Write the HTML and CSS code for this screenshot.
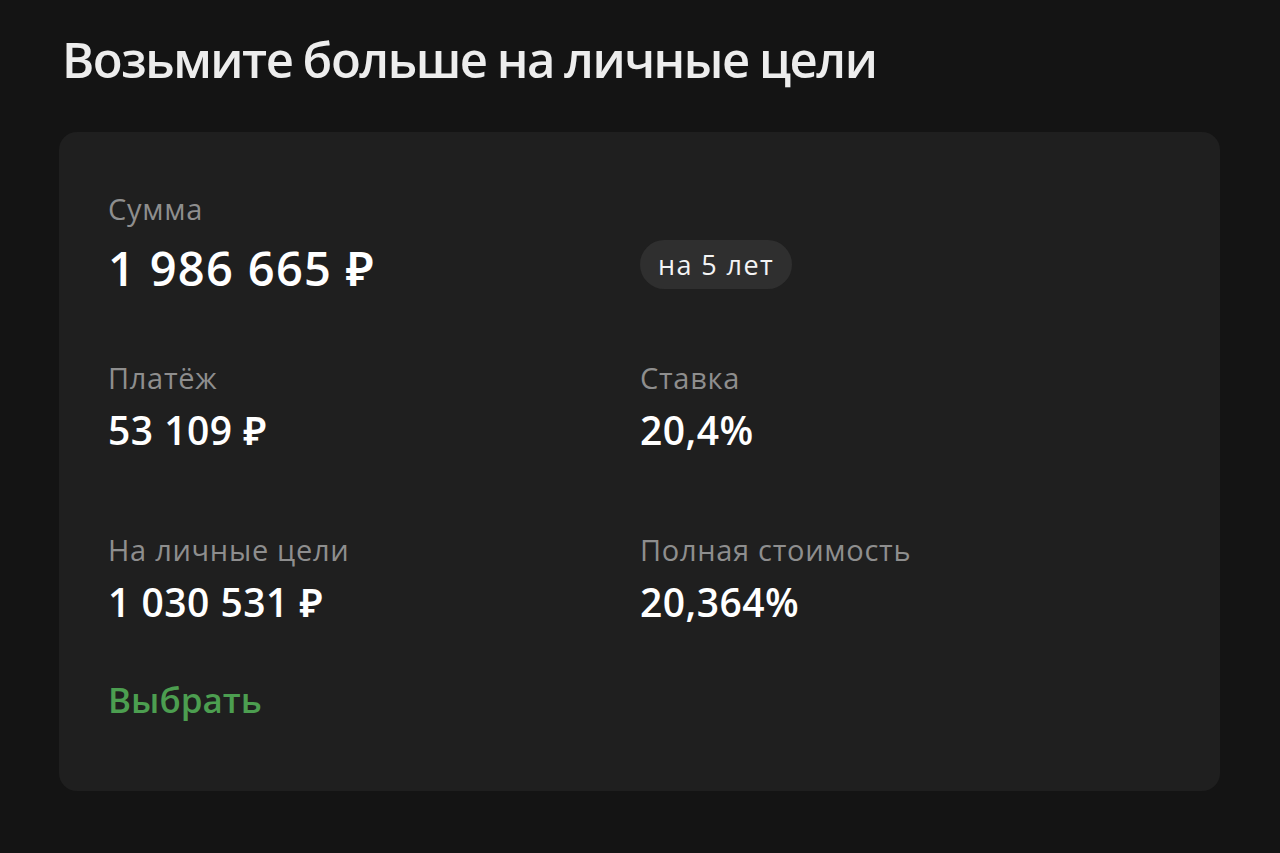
FILE: index.html
```html
<!DOCTYPE html>
<html lang="ru">
<head>
<meta charset="utf-8">
<link rel="stylesheet" href="styles.css">
</head>
<body>
<main class="page">
  <h1 class="title">Возьмите больше на личные цели</h1>
  <section class="card">
    <div class="grid">
      <div class="cell cell-sum">
        <div class="label">Сумма</div>
        <div class="value value-lg">1 986 665 ₽</div>
      </div>
      <div class="cell cell-term">
        <span class="pill">на 5 лет</span>
      </div>
      <div class="cell row2">
        <div class="label">Платёж</div>
        <div class="value">53 109 ₽</div>
      </div>
      <div class="cell row2">
        <div class="label">Ставка</div>
        <div class="value">20,4%</div>
      </div>
      <div class="cell row3">
        <div class="label">На личные цели</div>
        <div class="value">1 030 531 ₽</div>
      </div>
      <div class="cell row3">
        <div class="label">Полная стоимость</div>
        <div class="value">20,364%</div>
      </div>
    </div>
    <a class="action" href="#">Выбрать</a>
  </section>
</main>
</body>
</html>
```

FILE: styles.css
```css
* { box-sizing: border-box; }
html, body { margin: 0; padding: 0; }
body {
  background: #141414;
  font-family: "Open Sans", "Noto Sans", sans-serif;
  color: #f2f2f2;
  width: 1280px;
  height: 853px;
  overflow: hidden;
}
.page {
  padding: 26px 60px 0 59px;
}
.title {
  margin: 0 0 0 3px;
  font-size: 49px;
  line-height: 66px;
  font-weight: 600;
  color: #ededed;
  letter-spacing: -1.5px;
  word-spacing: -1px;
}
.card {
  margin-top: 40px;
  width: 1161px;
  height: 659px;
  background: #1f1f1f;
  border-radius: 18px;
  padding: 60px 49px 0 49px;
  display: flex;
  flex-direction: column;
}
.grid {
  display: grid;
  grid-template-columns: 532px 1fr;
}
.label {
  font-size: 29px;
  line-height: 34px;
  color: #8e8e8e;
  font-weight: 400;
  letter-spacing: 0.7px;
}
.value {
  margin-top: 12px;
  font-size: 39px;
  line-height: 46px;
  font-weight: 600;
  color: #ffffff;
  letter-spacing: 0.5px;
}
.value-lg {
  margin-top: 14px;
  font-size: 47px;
  line-height: 56px;
  letter-spacing: 1.3px;
}
.cell-term {
  display: flex;
  align-items: flex-start;
  padding-top: 48px;
}
.pill {
  display: inline-flex;
  align-items: center;
  height: 49px;
  padding: 0 18px;
  border-radius: 25px;
  background: #2f2f2f;
  font-size: 27px;
  font-weight: 400;
  letter-spacing: 1.4px;
  color: #f4f4f4;
}
.row2 { margin-top: 65px; }
.row3 { margin-top: 80px; }
.action {
  margin-top: 53px;
  align-self: flex-start;
  font-size: 35px;
  line-height: 44px;
  font-weight: 600;
  color: #4c9e50;
  text-decoration: none;
}
```
